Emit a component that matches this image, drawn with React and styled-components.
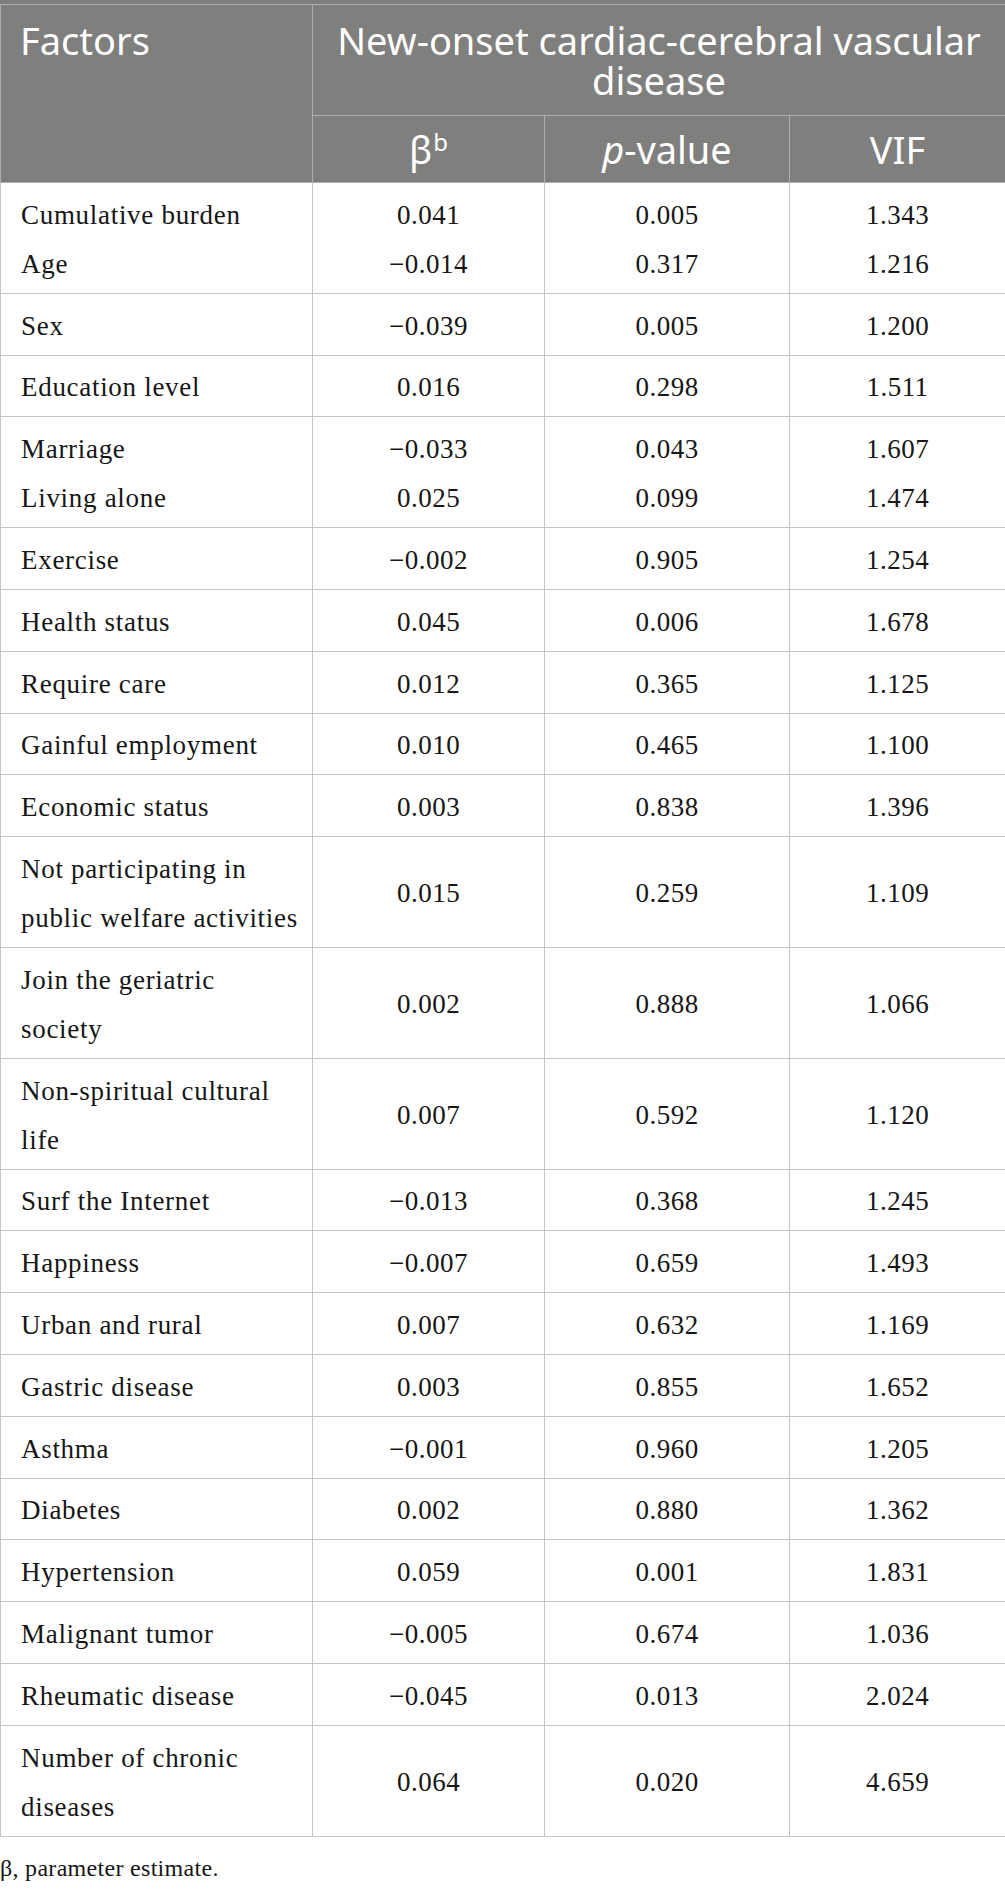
import React from "react"
import styled, { createGlobalStyle } from "styled-components"

const GlobalStyle = createGlobalStyle`
  html, body {
    margin: 0;
    padding: 0;
    background: #ffffff;
  }
`

const Page = styled.div`
  width: 1005px;
  border-top: 4px solid #7f807e;
`

const Table = styled.table`
  width: 1005px;
  border-collapse: collapse;
  table-layout: fixed;
`

const HeadCell = styled.th`
  background-color: #7f807e;
  color: #ffffff;
  font-family: "Noto Sans", "Open Sans", sans-serif;
  font-weight: 400;
  font-size: 38px;
  line-height: 40px;
  border: 1px solid #aeaeae;
  padding: ${(p) => (p.$sub ? "13px 8px" : "15px 8px")};
  padding-left: ${(p) => (p.$left ? "19px" : "8px")};
  text-align: ${(p) => (p.$left ? "left" : "center")};
  vertical-align: ${(p) => (p.$top ? "top" : "middle")};
`

const Sup = styled.sup`
  font-size: 24px;
  line-height: 0;
  vertical-align: 13px;
  margin-left: 1px;
`

const Italic = styled.i`
  font-style: italic;
`

const Cell = styled.td`
  font-family: "Liberation Serif", "Times New Roman", serif;
  font-size: 27px;
  letter-spacing: ${(p) => (p.$label ? "0.7px" : "0.5px")};
  line-height: 49px;
  color: #161616;
  border: 1px solid #c6c6c6;
  padding: 7.8px 8px 4px ${(p) => (p.$label ? "20px" : "8px")};
  text-align: ${(p) => (p.$label ? "left" : "center")};
  vertical-align: middle;
`

const Line = styled.div`
  white-space: nowrap;
`

const Footnote = styled.p`
  margin: 16px 0 0;
  font-family: "Liberation Serif", "Times New Roman", serif;
  font-size: 24px;
  letter-spacing: 0.3px;
  line-height: 30px;
  color: #161616;
`

const rows = [
  { f: ["Cumulative burden", "Age"], b: ["0.041", "\u22120.014"], p: ["0.005", "0.317"], v: ["1.343", "1.216"] },
  { f: ["Sex"], b: ["\u22120.039"], p: ["0.005"], v: ["1.200"] },
  { f: ["Education level"], b: ["0.016"], p: ["0.298"], v: ["1.511"] },
  { f: ["Marriage", "Living alone"], b: ["\u22120.033", "0.025"], p: ["0.043", "0.099"], v: ["1.607", "1.474"] },
  { f: ["Exercise"], b: ["\u22120.002"], p: ["0.905"], v: ["1.254"] },
  { f: ["Health status"], b: ["0.045"], p: ["0.006"], v: ["1.678"] },
  { f: ["Require care"], b: ["0.012"], p: ["0.365"], v: ["1.125"] },
  { f: ["Gainful employment"], b: ["0.010"], p: ["0.465"], v: ["1.100"] },
  { f: ["Economic status"], b: ["0.003"], p: ["0.838"], v: ["1.396"] },
  { f: ["Not participating in", "public welfare activities"], b: ["0.015"], p: ["0.259"], v: ["1.109"] },
  { f: ["Join the geriatric", "society"], b: ["0.002"], p: ["0.888"], v: ["1.066"] },
  { f: ["Non-spiritual cultural", "life"], b: ["0.007"], p: ["0.592"], v: ["1.120"] },
  { f: ["Surf the Internet"], b: ["\u22120.013"], p: ["0.368"], v: ["1.245"] },
  { f: ["Happiness"], b: ["\u22120.007"], p: ["0.659"], v: ["1.493"] },
  { f: ["Urban and rural"], b: ["0.007"], p: ["0.632"], v: ["1.169"] },
  { f: ["Gastric disease"], b: ["0.003"], p: ["0.855"], v: ["1.652"] },
  { f: ["Asthma"], b: ["\u22120.001"], p: ["0.960"], v: ["1.205"] },
  { f: ["Diabetes"], b: ["0.002"], p: ["0.880"], v: ["1.362"] },
  { f: ["Hypertension"], b: ["0.059"], p: ["0.001"], v: ["1.831"] },
  { f: ["Malignant tumor"], b: ["\u22120.005"], p: ["0.674"], v: ["1.036"] },
  { f: ["Rheumatic disease"], b: ["\u22120.045"], p: ["0.013"], v: ["2.024"] },
  { f: ["Number of chronic", "diseases"], b: ["0.064"], p: ["0.020"], v: ["4.659"] },
]

const Lines = ({ items }) => items.map((t, i) => <Line key={i}>{t}</Line>)

export default function App() {
  return (
    <Page>
      <GlobalStyle />
      <Table>
        <colgroup>
          <col style={{ width: 312 }} />
          <col style={{ width: 232 }} />
          <col style={{ width: 245 }} />
          <col style={{ width: 216 }} />
        </colgroup>
        <thead>
          <tr>
            <HeadCell rowSpan={2} $left $top>Factors</HeadCell>
            <HeadCell colSpan={3}>New-onset cardiac-cerebral vascular disease</HeadCell>
          </tr>
          <tr>
            <HeadCell $sub>β<Sup>b</Sup></HeadCell>
            <HeadCell $sub><Italic>p</Italic>-value</HeadCell>
            <HeadCell $sub>VIF</HeadCell>
          </tr>
        </thead>
        <tbody>
          {rows.map((r, i) => (
            <tr key={i}>
              <Cell $label><Lines items={r.f} /></Cell>
              <Cell><Lines items={r.b} /></Cell>
              <Cell><Lines items={r.p} /></Cell>
              <Cell><Lines items={r.v} /></Cell>
            </tr>
          ))}
        </tbody>
      </Table>
      <Footnote>β, parameter estimate.</Footnote>
    </Page>
  )
}
